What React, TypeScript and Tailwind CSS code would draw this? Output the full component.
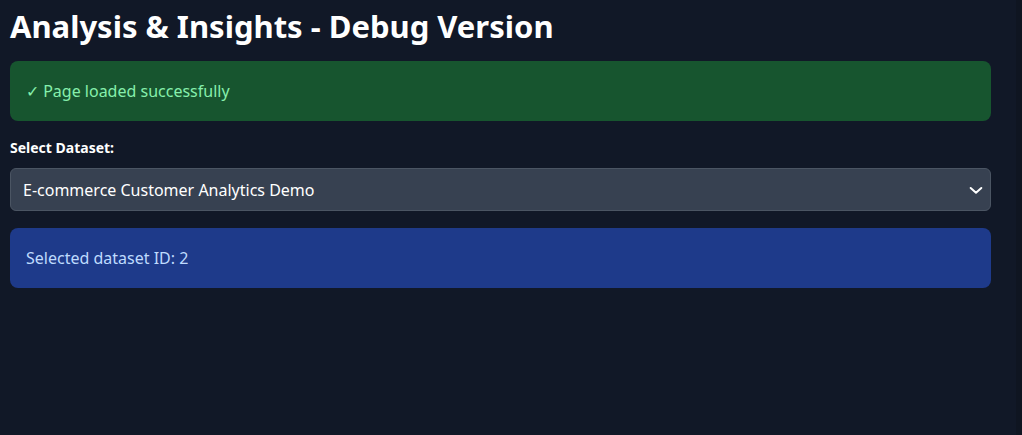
import React from 'react';

const App = () => {
  const [datasetId, setDatasetId] = React.useState("2");

  return (
    <div className="min-h-[435px] w-full bg-[#111827] text-white font-['Noto_Sans',sans-serif] flex">
      <div className="flex-1 pl-[10px] pr-[25px] pt-[6px]">
        <h1 className="text-[31px] font-bold leading-[40px] mb-[15px]">Analysis &amp; Insights - Debug Version</h1>

        {/* Status banner */}
        <div className="h-[60px] rounded-lg bg-[#17552f] px-4 flex items-center text-[#86efac] text-[16px]">
          ✓ Page loaded successfully
        </div>

        <label className="block mt-[17px] mb-[10px] text-[14px] font-bold leading-5">Select Dataset:</label>
        <div className="relative">
          <select
            value={datasetId}
            onChange={(e) => setDatasetId(e.target.value)}
            className="appearance-none w-full h-[43px] rounded-md bg-[#374151] border border-[#4b5563] px-3 text-[16px] text-white outline-none"
          >
            <option value="1">Sales Performance Q3</option>
            <option value="2">E-commerce Customer Analytics Demo</option>
          </select>
          <svg className="absolute right-[7px] top-1/2 -translate-y-1/2 pointer-events-none" width="16" height="16" viewBox="0 0 24 24" fill="none" stroke="white" strokeWidth="3" strokeLinecap="round" strokeLinejoin="round">
            <path d="M4 9l8 7 8-7" />
          </svg>
        </div>

        <div className="mt-[17px] h-[60px] rounded-lg bg-[#1e3a8a] px-4 flex items-center text-[#bfdbfe] text-[16px]">
          Selected dataset ID: {datasetId}
        </div>
      </div>
      <div className="w-[6px] bg-[#0f1521]" />
    </div>
  );
};

export default App;
